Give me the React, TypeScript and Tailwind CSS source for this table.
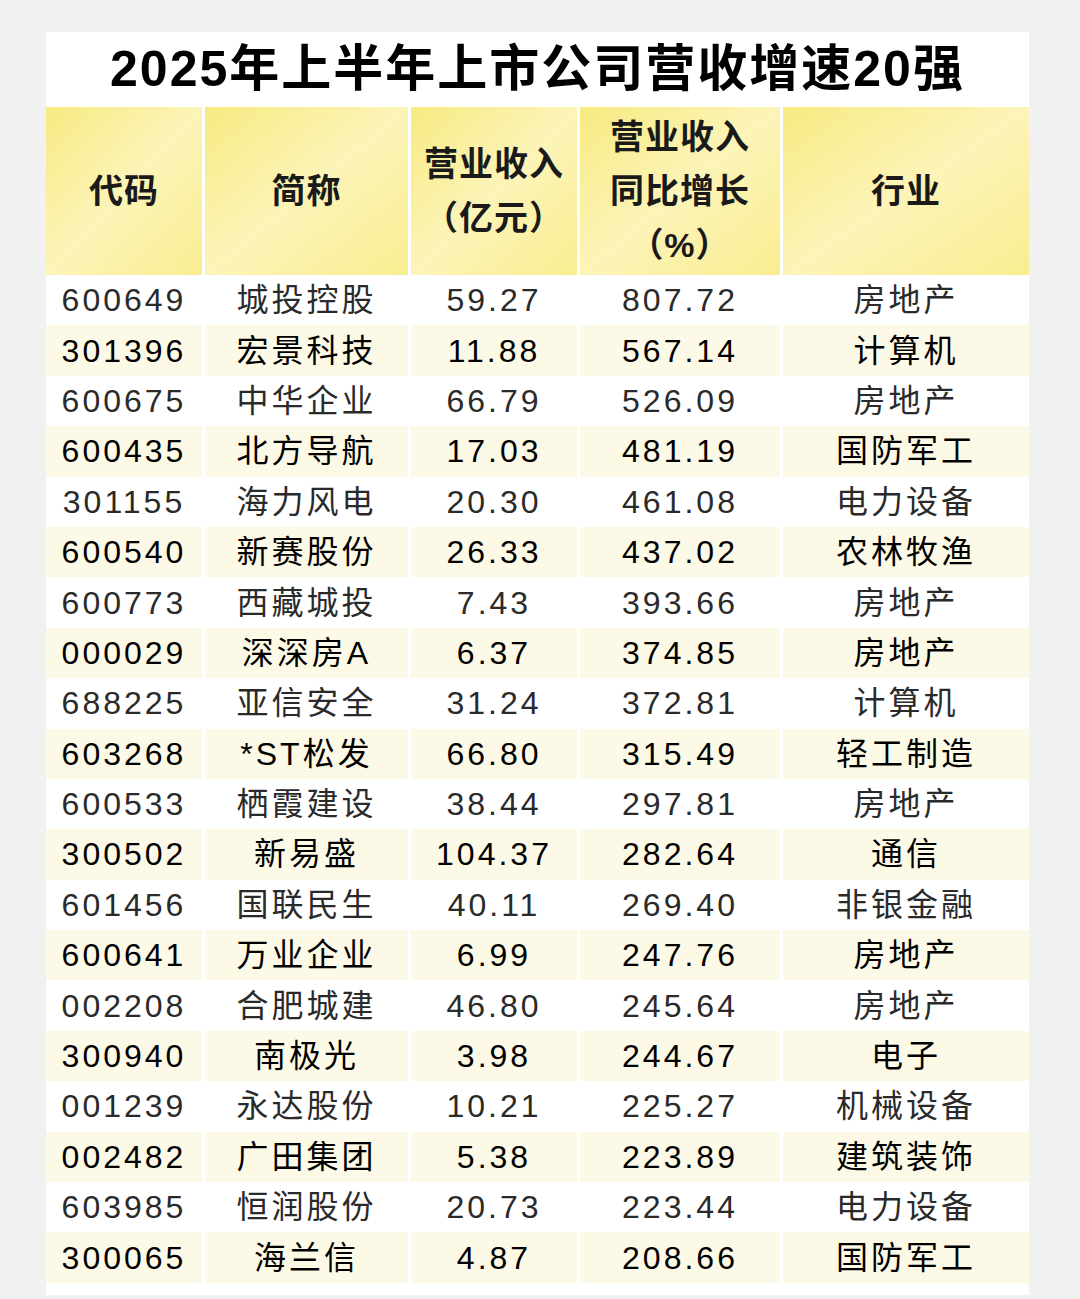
import React from 'react';

type Row = [string, string, string, string, string];

const rows: Row[] = [
  ['600649', '城投控股', '59.27', '807.72', '房地产'],
  ['301396', '宏景科技', '11.88', '567.14', '计算机'],
  ['600675', '中华企业', '66.79', '526.09', '房地产'],
  ['600435', '北方导航', '17.03', '481.19', '国防军工'],
  ['301155', '海力风电', '20.30', '461.08', '电力设备'],
  ['600540', '新赛股份', '26.33', '437.02', '农林牧渔'],
  ['600773', '西藏城投', '7.43', '393.66', '房地产'],
  ['000029', '深深房A', '6.37', '374.85', '房地产'],
  ['688225', '亚信安全', '31.24', '372.81', '计算机'],
  ['603268', '*ST松发', '66.80', '315.49', '轻工制造'],
  ['600533', '栖霞建设', '38.44', '297.81', '房地产'],
  ['300502', '新易盛', '104.37', '282.64', '通信'],
  ['601456', '国联民生', '40.11', '269.40', '非银金融'],
  ['600641', '万业企业', '6.99', '247.76', '房地产'],
  ['002208', '合肥城建', '46.80', '245.64', '房地产'],
  ['300940', '南极光', '3.98', '244.67', '电子'],
  ['001239', '永达股份', '10.21', '225.27', '机械设备'],
  ['002482', '广田集团', '5.38', '223.89', '建筑装饰'],
  ['603985', '恒润股份', '20.73', '223.44', '电力设备'],
  ['300065', '海兰信', '4.87', '208.66', '国防军工'],
];

const cols = 'grid grid-cols-[156px_203px_166px_200px_246px] gap-x-[3px]';

const HeaderCell: React.FC<{ lines: string[] }> = ({ lines }) => (
  <div className="flex flex-col items-center justify-center bg-gradient-to-br from-[#f7ea80] via-[#fcf4b8] to-[#f9ed90] leading-[54px]">
    {lines.map((l) => (
      <span key={l}>{l}</span>
    ))}
  </div>
);

const App: React.FC = () => {
  return (
    <div
      className="min-h-[1299px] w-[1080px] bg-[#f1f1f1] pt-[32px] text-[#161616]"
      style={{ fontFamily: '"Liberation Sans", "Noto Sans CJK SC", sans-serif' }}
    >
      <div className="ml-[46px] w-[983px] bg-white pb-[12px]">
        <h1 className="flex h-[75px] items-center justify-center text-[50px] font-bold tracking-[2px] text-black">
          2025年上半年上市公司营收增速20强
        </h1>
        <div className={`${cols} h-[168px] text-[34px] font-bold text-[#1a1a1a] tracking-[1px]`}>
          <HeaderCell lines={['代码']} />
          <HeaderCell lines={['简称']} />
          <HeaderCell lines={['营业收入', '（亿元）']} />
          <HeaderCell lines={['营业收入', '同比增长', '（%）']} />
          <HeaderCell lines={['行业']} />
        </div>
        <div className="flex flex-col">
          {rows.map((r, i) => {
            const hl = i % 2 === 1;
            return (
              <div
                key={r[0]}
                className={`${cols} h-[50.4px] text-[32px] tracking-[3px] font-normal ${
                  hl ? 'text-black' : 'text-[#2a2a2a]'
                }`}
              >
                {r.map((c, j) => (
                  <div
                    key={j}
                    className={`flex items-center justify-center ${hl ? 'bg-[#fcf9e6]' : ''}`}
                  >
                    {c}
                  </div>
                ))}
              </div>
            );
          })}
        </div>
      </div>
    </div>
  );
};

export default App;
